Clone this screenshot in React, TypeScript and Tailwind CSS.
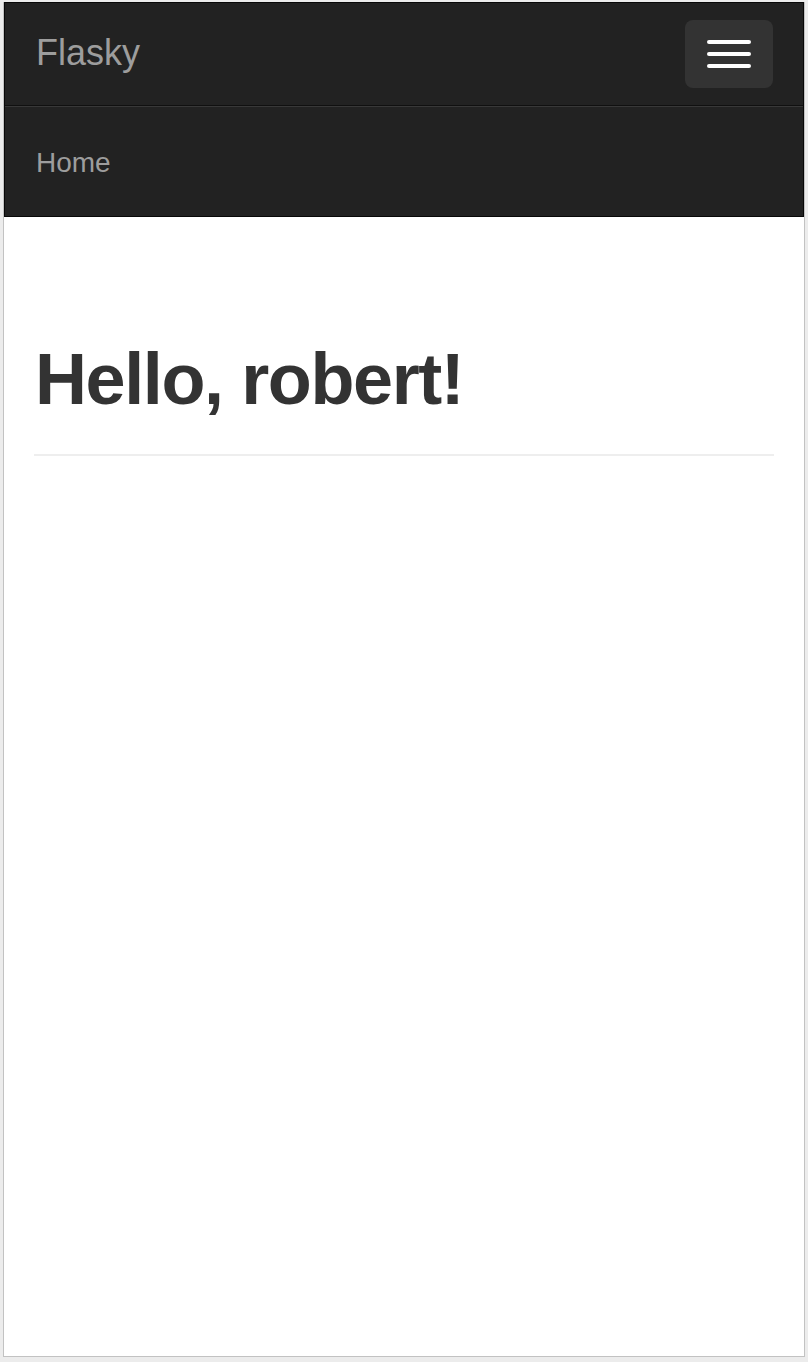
import React from "react";

export default function App() {
  return (
    <div
      className="w-[808px] h-[1362px] bg-[#ececec] pt-[2px] pl-[3px] overflow-hidden"
      style={{ fontFamily: '"Liberation Sans", Arial, sans-serif' }}
    >
      <div className="w-[802px] h-[1355px] bg-white border-x border-b border-[#c2c2c2]">
        <nav className="w-[800px] bg-[#222222] border border-[#080808]">
          <div className="h-[102px] flex items-start justify-between">
            <a className="block pl-[31px] pt-[30px] text-[36px] leading-[40px] text-[#9d9d9d]">
              Flasky
            </a>
            <button className="mt-[17px] mr-[30px] w-[88px] h-[68px] rounded-[8px] bg-[#333333] flex flex-col items-center justify-center gap-[8px]">
              <span className="block w-[44px] h-[4px] rounded-[2px] bg-white" />
              <span className="block w-[44px] h-[4px] rounded-[2px] bg-white" />
              <span className="block w-[44px] h-[4px] rounded-[2px] bg-white" />
            </button>
          </div>
          <div className="border-t border-[#101010] shadow-[inset_0_1px_0_rgba(255,255,255,0.1)] h-[111px]">
            <div className="pl-[31px] pt-[37px] text-[28px] leading-[40px] text-[#9d9d9d]">
              Home
            </div>
          </div>
        </nav>
        <div className="px-[30px]">
          <div className="mt-[123px] pb-[35px] border-b-2 border-[#eeeeee]">
            <h1 className="pl-[1px] text-[72px] leading-[79px] font-bold text-[#333333] tracking-[-1.4px]">
              Hello, robert!
            </h1>
          </div>
        </div>
      </div>
    </div>
  );
}
